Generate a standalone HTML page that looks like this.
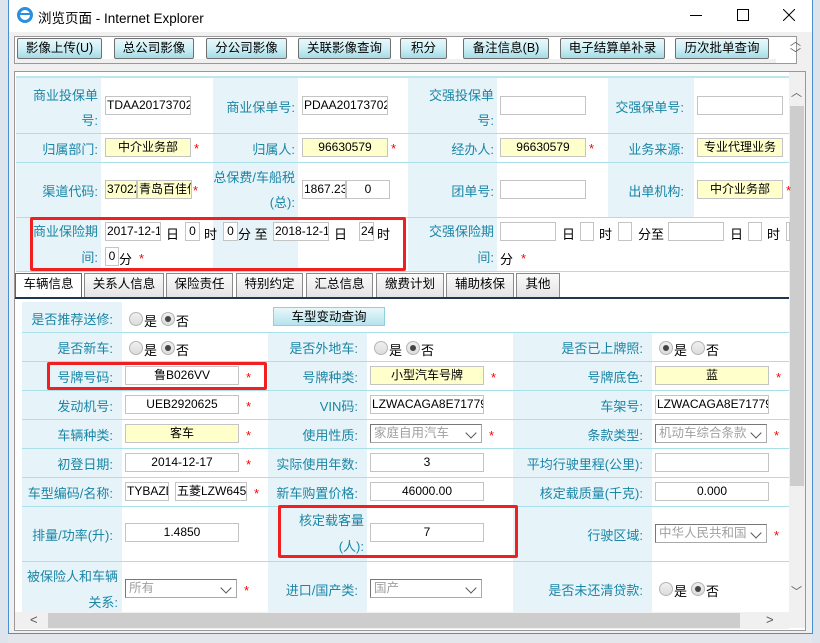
<!DOCTYPE html>
<html><head><meta charset="utf-8"><style>
*{margin:0;padding:0;box-sizing:border-box}
body{width:820px;height:643px;overflow:hidden;background:#e3e7ec;font-family:"Liberation Sans","Noto Sans CJK SC",sans-serif;font-size:13px;position:relative}
.a{position:absolute}
.lb{position:absolute;color:#1a86a6;font-size:13px;text-align:right;white-space:nowrap}
.in{position:absolute;border:1px solid #c4c4c4;background:#fff;height:19px;font-size:12px;line-height:17px;overflow:hidden;white-space:nowrap;color:#000;text-align:center;padding:0 1px}
.l{text-align:left}
.y{background:#ffffcc}
.st{position:absolute;color:#f00;font-size:13px}
.t{position:absolute;font-size:13px;color:#000;white-space:nowrap}
.bt{position:absolute;top:38px;height:21px;border:1px solid #707070;border-radius:2px;background:linear-gradient(#eaf8fb,#cdeff5 50%,#a6dbe6);font-size:12.5px;text-align:center;line-height:19px;color:#000}
.bl{position:absolute;background:#e6f3f8}
.hl{position:absolute;height:1px;background:#a9dfe9}
.tab{position:absolute;top:273px;height:24px;border:1px solid #8a8a8a;border-bottom:none;background:linear-gradient(#fafafa,#e4e4e4);font-size:12.5px;text-align:center;line-height:21px}
.r{position:absolute;width:14px;height:14px;border-radius:50%;border:1px solid #b5b5b5;background:linear-gradient(#f0f0f0,#dcdcdc)}
.r.on::after{content:"";position:absolute;left:3px;top:3px;width:6px;height:6px;border-radius:50%;background:#444}
.sel{position:absolute;height:19px;border:1px solid #aaa;border-top-color:#777;border-left-color:#777;background:#fff;color:#a0a0a0;font-size:12.5px;line-height:17px;padding-left:3px;white-space:nowrap;overflow:hidden}
.sel::after{content:"";position:absolute;right:6px;top:4px;width:7px;height:7px;border-right:1.5px solid #555;border-bottom:1.5px solid #555;transform:rotate(45deg)}
.rb{position:absolute;border:3px solid #f02020;border-radius:2px}
</style></head><body>
<div class="a" style="left:0;top:0;width:8px;height:643px;background:#dde4ec"></div>
<div class="a" style="left:812px;top:0;width:8px;height:643px;background:#dde4ec"></div>
<div class="a" style="left:8px;top:0;width:805px;height:634px;background:#f0f0f0;border:1px solid #4a90d0;border-top:none"></div>
<div class="a" style="left:9px;top:0;width:803px;height:32px;background:#fff"></div>
<div class="a" style="left:17px;top:7px;width:16px;height:16px;border-radius:50%;border:3px solid #2a8fe0;"></div>
<div class="a" style="left:20px;top:13px;width:10px;height:2px;background:#2a8fe0"></div>
<div class="t" style="left:38px;top:7px;font-size:13.5px">浏览页面 - Internet Explorer</div>
<div class="a" style="left:690px;top:15px;width:12px;height:1px;background:#000"></div>
<div class="a" style="left:737px;top:9px;width:12px;height:12px;border:1px solid #000"></div>
<svg class="a" style="left:783px;top:9px" width="12" height="12"><path d="M0 0L12 12M12 0L0 12" stroke="#000" stroke-width="1"/></svg>
<div class="a" style="left:14px;top:36px;width:783px;height:28px;border:1px solid #999;background:#fff"></div>
<div class="a" style="left:16px;top:59px;width:760px;height:4px;background:#f0f0f0"></div>
<div class="bt" style="left:17px;width:85px">影像上传(U)</div>
<div class="bt" style="left:114px;width:80px">总公司影像</div>
<div class="bt" style="left:206px;width:81px">分公司影像</div>
<div class="bt" style="left:298px;width:93px">关联影像查询</div>
<div class="bt" style="left:400px;width:47px">积分</div>
<div class="bt" style="left:463px;width:86px">备注信息(B)</div>
<div class="bt" style="left:560px;width:105px">电子结算单补录</div>
<div class="bt" style="left:675px;width:94px">历次批单查询</div>
<div class="t" style="left:790px;top:36px;font-size:11px;color:#555;line-height:12px">︿<br>﹀</div>
<div class="a" style="left:14px;top:71px;width:792px;height:560px;border:1px solid #999;background:#fff"></div>
<div class="a" style="left:16px;top:76px;width:773px;height:2px;background:#bde6ee"></div>
<div class="a" style="left:789px;top:72px;width:16px;height:556px;background:#f0f0f0"></div>
<div class="a" style="left:790px;top:106px;width:14px;height:380px;background:#cdcdcd"></div>
<div class="t" style="left:791px;top:84px;font-size:11px;color:#555">︿</div>
<div class="t" style="left:791px;top:583px;font-size:11px;color:#555">﹀</div>
<div class="a" style="left:15px;top:612px;width:774px;height:17px;background:#f0f0f0"></div>
<div class="a" style="left:48px;top:613px;width:692px;height:15px;background:#cdcdcd"></div>
<div class="t" style="left:30px;top:612px;font-size:13px;color:#555">&lt;</div>
<div class="t" style="left:766px;top:612px;font-size:13px;color:#555">&gt;</div>

<div class="bl" style="left:16px;top:78px;width:85px;height:194px"></div>
<div class="bl" style="left:213px;top:78px;width:85px;height:194px"></div>
<div class="bl" style="left:408px;top:78px;width:89px;height:194px"></div>
<div class="bl" style="left:608px;top:78px;width:86px;height:139px"></div>
<div class="hl" style="left:16px;top:133px;width:773px"></div>
<div class="hl" style="left:16px;top:162px;width:773px"></div>
<div class="hl" style="left:16px;top:217px;width:773px"></div>
<div class="hl" style="left:16px;top:271px;width:773px"></div>

<div class="lb" style="left:16px;top:83px;width:82px;line-height:25px">商业投保单<br>号:</div>
<div class="in l" style="left:105px;top:96px;width:86px">TDAA20173702</div>
<div class="lb" style="left:213px;top:97px;width:82px">商业保单号:</div>
<div class="in l" style="left:302px;top:96px;width:86px">PDAA20173702</div>
<div class="lb" style="left:408px;top:83px;width:86px;line-height:25px">交强投保单<br>号:</div>
<div class="in" style="left:500px;top:96px;width:86px"></div>
<div class="lb" style="left:608px;top:97px;width:76px">交强保单号:</div>
<div class="in" style="left:697px;top:96px;width:86px"></div>
<div class="lb" style="left:16px;top:139px;width:82px">归属部门:</div>
<div class="in y" style="left:105px;top:138px;width:86px">中介业务部</div><div class="st" style="left:194px;top:141px">*</div>
<div class="lb" style="left:213px;top:139px;width:82px">归属人:</div>
<div class="in y" style="left:302px;top:138px;width:86px">96630579</div><div class="st" style="left:391px;top:141px">*</div>
<div class="lb" style="left:408px;top:139px;width:86px">经办人:</div>
<div class="in y" style="left:500px;top:138px;width:86px">96630579</div><div class="st" style="left:589px;top:141px">*</div>
<div class="lb" style="left:608px;top:139px;width:76px">业务来源:</div>
<div class="in y" style="left:697px;top:138px;width:86px">专业代理业务</div>
<div class="lb" style="left:16px;top:181px;width:82px">渠道代码:</div>
<div class="in y l" style="left:105px;top:180px;width:32px">37022</div>
<div class="in y l" style="left:137px;top:180px;width:55px">青岛百佳信</div><div class="st" style="left:193px;top:183px">*</div>
<div class="lb" style="left:213px;top:165px;width:82px;line-height:25px">总保费/车船税<br>(总):</div>
<div class="in l" style="left:302px;top:180px;width:44px">1867.23</div>
<div class="in" style="left:346px;top:180px;width:44px">0</div>
<div class="lb" style="left:408px;top:181px;width:86px">团单号:</div>
<div class="in" style="left:500px;top:180px;width:86px"></div>
<div class="lb" style="left:608px;top:181px;width:76px">出单机构:</div>
<div class="in y" style="left:697px;top:180px;width:86px">中介业务部</div><div class="st" style="left:786px;top:183px">*</div>
<div class="lb" style="left:16px;top:219px;width:82px;line-height:26px">商业保险期<br>间:</div>
<div class="in l" style="left:105px;top:222px;width:56px">2017-12-1</div><div class="t" style="left:166px;top:224px">日</div>
<div class="in" style="left:185px;top:222px;width:15px">0</div><div class="t" style="left:204px;top:224px">时</div>
<div class="in" style="left:223px;top:222px;width:15px">0</div><div class="t" style="left:238px;top:224px">分 至</div>
<div class="in l" style="left:273px;top:222px;width:56px">2018-12-1</div><div class="t" style="left:334px;top:224px">日</div>
<div class="in" style="left:359px;top:222px;width:15px">24</div><div class="t" style="left:377px;top:224px">时</div>
<div class="in" style="left:105px;top:247px;width:14px">0</div><div class="t" style="left:119px;top:249px">分</div><div class="st" style="left:139px;top:251px">*</div>
<div class="lb" style="left:408px;top:219px;width:86px;line-height:26px">交强保险期<br>间:</div>
<div class="in" style="left:500px;top:222px;width:56px"></div><div class="t" style="left:562px;top:224px">日</div>
<div class="in" style="left:580px;top:222px;width:14px"></div><div class="t" style="left:599px;top:224px">时</div>
<div class="in" style="left:618px;top:222px;width:14px"></div><div class="t" style="left:638px;top:224px">分至</div>
<div class="in" style="left:668px;top:222px;width:56px"></div><div class="t" style="left:730px;top:224px">日</div>
<div class="in" style="left:748px;top:222px;width:14px"></div><div class="t" style="left:767px;top:224px">时</div>
<div class="in" style="left:786px;top:222px;width:4px"></div>
<div class="t" style="left:500px;top:249px">分</div><div class="st" style="left:521px;top:251px">*</div>
<div class="rb" style="left:30px;top:217px;width:376px;height:54px"></div>

<div class="a" style="left:15px;top:297px;width:774px;height:2px;background:#1f3550"></div>
<div class="tab" style="left:15px;width:67px;background:#fff;border-color:#4a6a90">车辆信息</div>
<div class="tab" style="left:84px;width:80px">关系人信息</div>
<div class="tab" style="left:166px;width:67px">保险责任</div>
<div class="tab" style="left:236px;width:67px">特别约定</div>
<div class="tab" style="left:306px;width:67px">汇总信息</div>
<div class="tab" style="left:376px;width:68px">缴费计划</div>
<div class="tab" style="left:446px;width:68px">辅助核保</div>
<div class="tab" style="left:516px;width:44px">其他</div>

<div class="bl" style="left:22px;top:302px;width:100px;height:310px"></div>
<div class="bl" style="left:268px;top:332px;width:99px;height:280px"></div>
<div class="bl" style="left:513px;top:332px;width:139px;height:280px"></div>
<div class="hl" style="left:22px;top:332px;width:767px"></div>
<div class="hl" style="left:22px;top:361px;width:767px"></div>
<div class="hl" style="left:22px;top:390px;width:767px"></div>
<div class="hl" style="left:22px;top:419px;width:767px"></div>
<div class="hl" style="left:22px;top:448px;width:767px"></div>
<div class="hl" style="left:22px;top:477px;width:767px"></div>
<div class="hl" style="left:22px;top:506px;width:767px"></div>
<div class="hl" style="left:22px;top:561px;width:767px"></div>

<div class="lb" style="left:22px;top:309px;width:91px">是否推荐送修:</div>
<div class="r" style="left:129px;top:312px"></div><div class="t" style="left:144px;top:311px">是</div>
<div class="r on" style="left:161px;top:312px"></div><div class="t" style="left:176px;top:311px">否</div>
<div class="a" style="left:273px;top:307px;width:112px;height:19px;border:1px solid #8fd0e0;background:linear-gradient(#e8f7fa,#b6e3ec);font-size:12.5px;text-align:center;line-height:18px">车型变动查询</div>
<div class="lb" style="left:22px;top:338px;width:91px">是否新车:</div>
<div class="r" style="left:129px;top:341px"></div><div class="t" style="left:144px;top:340px">是</div>
<div class="r on" style="left:161px;top:341px"></div><div class="t" style="left:176px;top:340px">否</div>
<div class="lb" style="left:268px;top:338px;width:90px">是否外地车:</div>
<div class="r" style="left:374px;top:341px"></div><div class="t" style="left:389px;top:340px">是</div>
<div class="r on" style="left:406px;top:341px"></div><div class="t" style="left:421px;top:340px">否</div>
<div class="lb" style="left:513px;top:338px;width:130px">是否已上牌照:</div>
<div class="r on" style="left:659px;top:341px"></div><div class="t" style="left:674px;top:340px">是</div>
<div class="r" style="left:691px;top:341px"></div><div class="t" style="left:706px;top:340px">否</div>
<div class="lb" style="left:22px;top:367px;width:91px">号牌号码:</div>
<div class="in" style="left:125px;top:366px;width:114px">鲁B026VV</div><div class="st" style="left:246px;top:370px">*</div>
<div class="lb" style="left:268px;top:367px;width:90px">号牌种类:</div>
<div class="in y" style="left:370px;top:366px;width:114px">小型汽车号牌</div><div class="st" style="left:491px;top:370px">*</div>
<div class="lb" style="left:513px;top:367px;width:130px">号牌底色:</div>
<div class="in y" style="left:655px;top:366px;width:114px">蓝</div><div class="st" style="left:776px;top:370px">*</div>
<div class="rb" style="left:47px;top:362px;width:220px;height:28px"></div>
<div class="lb" style="left:22px;top:396px;width:91px">发动机号:</div>
<div class="in" style="left:125px;top:395px;width:114px">UEB2920625</div><div class="st" style="left:246px;top:399px">*</div>
<div class="lb" style="left:268px;top:396px;width:90px">VIN码:</div>
<div class="in l" style="left:370px;top:395px;width:114px">LZWACAGA8E71779</div>
<div class="lb" style="left:513px;top:396px;width:130px">车架号:</div>
<div class="in l" style="left:655px;top:395px;width:114px">LZWACAGA8E71779</div>
<div class="lb" style="left:22px;top:425px;width:91px">车辆种类:</div>
<div class="in y" style="left:125px;top:424px;width:114px">客车</div><div class="st" style="left:246px;top:428px">*</div>
<div class="lb" style="left:268px;top:425px;width:90px">使用性质:</div>
<div class="sel" style="left:370px;top:424px;width:112px">家庭自用汽车</div><div class="st" style="left:489px;top:428px">*</div>
<div class="lb" style="left:513px;top:425px;width:130px">条款类型:</div>
<div class="sel" style="left:655px;top:424px;width:112px">机动车综合条款</div><div class="st" style="left:774px;top:428px">*</div>
<div class="lb" style="left:22px;top:454px;width:91px">初登日期:</div>
<div class="in" style="left:125px;top:453px;width:114px">2014-12-17</div><div class="st" style="left:246px;top:457px">*</div>
<div class="lb" style="left:268px;top:454px;width:90px">实际使用年数:</div>
<div class="in" style="left:370px;top:453px;width:114px">3</div>
<div class="lb" style="left:513px;top:454px;width:130px">平均行驶里程(公里):</div>
<div class="in" style="left:655px;top:453px;width:114px"></div>
<div class="lb" style="left:22px;top:483px;width:91px">车型编码/名称:</div>
<div class="in l" style="left:125px;top:482px;width:44px">TYBAZD</div>
<div class="in l" style="left:175px;top:482px;width:72px">五菱LZW645</div><div class="st" style="left:254px;top:486px">*</div>
<div class="lb" style="left:268px;top:483px;width:90px">新车购置价格:</div>
<div class="in" style="left:370px;top:482px;width:114px">46000.00</div>
<div class="lb" style="left:513px;top:483px;width:130px">核定载质量(千克):</div>
<div class="in" style="left:655px;top:482px;width:114px">0.000</div>
<div class="lb" style="left:22px;top:525px;width:91px">排量/功率(升):</div>
<div class="in" style="left:125px;top:523px;width:114px">1.4850</div>
<div class="lb" style="left:268px;top:508px;width:96px;line-height:26px">核定载客量<br>(人):</div>
<div class="in" style="left:370px;top:523px;width:114px">7</div>
<div class="lb" style="left:513px;top:525px;width:130px">行驶区域:</div>
<div class="sel" style="left:655px;top:524px;width:112px">中华人民共和国</div><div class="st" style="left:774px;top:528px">*</div>
<div class="rb" style="left:278px;top:505px;width:240px;height:53px"></div>
<div class="lb" style="left:22px;top:564px;width:96px;line-height:26px">被保险人和车辆<br>关系:</div>
<div class="sel" style="left:125px;top:579px;width:112px">所有</div><div class="st" style="left:244px;top:583px">*</div>
<div class="lb" style="left:268px;top:580px;width:90px">进口/国产类:</div>
<div class="sel" style="left:370px;top:579px;width:112px">国产</div>
<div class="lb" style="left:513px;top:580px;width:130px">是否未还清贷款:</div>
<div class="r" style="left:659px;top:582px"></div><div class="t" style="left:674px;top:581px">是</div>
<div class="r on" style="left:691px;top:582px"></div><div class="t" style="left:706px;top:581px">否</div>
</body></html>
